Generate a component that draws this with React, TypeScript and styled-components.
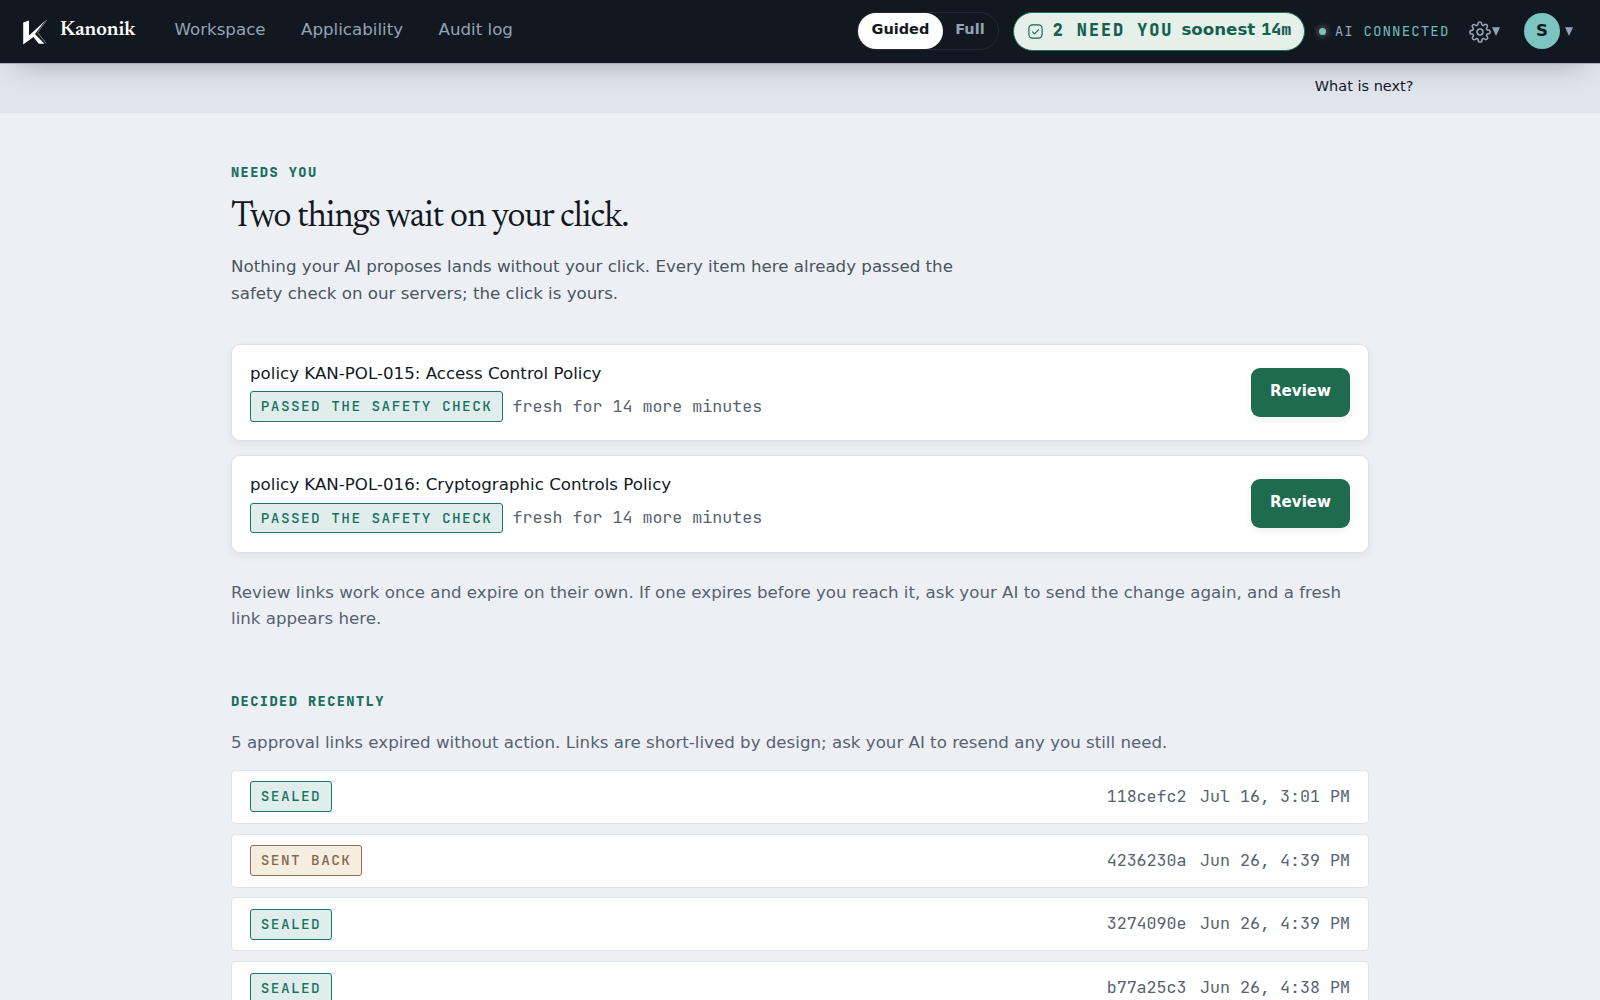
import React from "react";
import styled, { createGlobalStyle } from "styled-components";

const sans = '"DejaVu Sans", sans-serif';
const mono = '"JetBrains Mono", "DejaVu Sans Mono", monospace';
const serif = '"Newsreader Text", "Newsreader 16pt", Newsreader, "Liberation Serif", serif';

const Global = createGlobalStyle`
  *, *::before, *::after { box-sizing: border-box; }
  html, body { margin: 0; padding: 0; background: #ecf0f5; }
  body { font-family: ${sans}; font-size: 16.67px; line-height: 26.67px; color: #12181f; height: 1000px; overflow: hidden; }
  h1, h2, p { margin: 0; }
  button { font-family: inherit; border: 0; cursor: pointer; }
`;

const Header = styled.header`
  position: relative;
  z-index: 2;
  height: 63px;
  display: flex;
  align-items: center;
  padding: 0 27px 0 22px;
  background: #12181f;
  box-shadow: 0 1px 0 #a5adb7, 0 18px 30px -18px rgba(18, 24, 31, 0.33);
`;

const Brand = styled.a`
  display: flex;
  align-items: center;
  width: 152.5px;
  color: #fff;
`;

const BrandName = styled.span`
  margin: -4px 0 0 12px;
  font: 600 20.4px/26px ${serif};
`;

const Nav = styled.nav`
  display: flex;
  gap: 35.5px;
  margin-top: -2px;
  color: #94a3b5;
`;

const Tools = styled.div`
  display: flex;
  align-items: center;
  margin-left: auto;
`;

const Toggle = styled.div`
  display: flex;
  height: 38px;
  padding: 1px;
  margin: -1px 14px 0 0;
  border: 1px solid #252c35;
  border-radius: 19px;
`;

const ToggleOption = styled.button<{ $on?: boolean }>`
  padding: 0 ${(p) => (p.$on ? 13.3 : 12.6)}px 4px;
  border-radius: 18px;
  margin: ${(p) => (p.$on ? "-1px 0 -1px -1px" : "0")};
  background: ${(p) => (p.$on ? "#fff" : "transparent")};
  color: ${(p) => (p.$on ? "#12181f" : "#94a3b5")};
  font-size: 14.5px;
  font-weight: 700;
`;

const Pending = styled.a`
  display: flex;
  align-items: center;
  height: 39px;
  width: 292px;
  margin-top: -1px;
  padding: 0 0 2px 14px;
  border: 1px solid #1c6f5c;
  border-radius: 20px;
  background: #e6f0ea;
  color: #17604f;
  font-weight: 700;
  white-space: nowrap;

  svg { margin-top: 3px; }
`;

const PendingCount = styled.span`
  margin-left: 9.5px;
  font: 800 16.8px/26px ${mono};
  letter-spacing: 2px;
`;

const PendingTime = styled.span`
  margin-left: 8px;
  span { font-family: ${mono}; font-weight: 800; font-size: 16.67px; margin-left: 6px; }
`;

const Status = styled.span`
  display: flex;
  align-items: center;
  margin: -1px 0 0 14px;
  color: #6fbab6;
  font: 400 14.2px/22px ${mono};
  letter-spacing: 1.05px;
  white-space: nowrap;
  span { margin-right: 9.57px; color: #93a3b4; }
`;

const StatusDot = styled.i`
  width: 7px;
  height: 7px;
  margin-right: 8.5px;
  border-radius: 50%;
  background: #7cc4c0;
  box-shadow: 0 0 5px 3px rgba(255, 255, 255, 0.16);
`;

const MenuButton = styled.button<{ $gap: number; $left: number }>`
  display: flex;
  align-items: center;
  gap: ${(p) => p.$gap}px;
  margin-left: ${(p) => p.$left}px;
  padding: 0;
  background: none;
  color: #94a3b5;
`;

const Avatar = styled.span`
  display: grid;
  place-items: center;
  width: 36px;
  height: 36px;
  margin-top: -1px;
  padding-bottom: 2px;
  border-radius: 50%;
  background: #7cc4c0;
  color: #12181f;
  font-size: 16.67px;
  font-weight: 700;
`;

const Band = styled.div`
  display: flex;
  justify-content: flex-end;
  height: 50px;
  padding: 10px 186.5px 0 0;
  background: #e0e5ed;
  border-bottom: 1px solid #dce2ea;
  font-size: 14.5px;
`;

const Main = styled.main`
  width: 1138px;
  margin: 0 auto;
  padding-top: 46px;
`;

const Eyebrow = styled.h2<{ $top?: number }>`
  margin-top: ${(p) => p.$top ?? 0}px;
  font: 800 13.7px/26px ${mono};
  letter-spacing: 1.4px;
  color: #1c6f5c;
`;

const Title = styled.h1`
  margin-top: 11px;
  font: 400 35.4px/44px ${serif};
  letter-spacing: -0.94px;
  white-space: nowrap;
  color: #12181f;
`;

const Lead = styled.p`
  width: 740px;
  margin-top: 14px;
  color: #4a5560;
`;

const Note = styled.p<{ $top: number }>`
  margin-top: ${(p) => p.$top}px;
  color: #56626e;
`;

const Cards = styled.div`
  display: grid;
  gap: 13.8px;
  margin-top: 36.4px;
`;

const Card = styled.article`
  display: flex;
  align-items: center;
  justify-content: space-between;
  height: 97.5px;
  padding: 0 18px;
  background: #fff;
  border: 1px solid #dce2ea;
  border-radius: 9px;
  box-shadow: 0 3px 8px rgba(18, 24, 31, 0.06);
`;

const CardBody = styled.div`
  display: grid;
  gap: 4px;
  padding-bottom: 2px;
`;

const Line = styled.div`
  display: flex;
  align-items: center;
  gap: 9.4px;
`;

const Chip = styled.span<{ $warn?: boolean }>`
  height: 30.7px;
  padding: 0 9.8px;
  border: 1px solid ${(p) => (p.$warn ? "#92704f" : "#1c7568")};
  border-radius: 3px;
  background: ${(p) => (p.$warn ? "#f5eee0" : "#e0eeeb")};
  color: ${(p) => (p.$warn ? "#85684d" : "#1c7063")};
  font: 500 14.4px/28px ${mono};
  letter-spacing: 1.43px;
  white-space: nowrap;
`;

const Meta = styled.span`
  display: flex;
  gap: 13.5px;
  padding-bottom: 2px;
  font: 400 16.67px/26px ${mono};
  color: #56626e;
`;

const Review = styled.button`
  width: 99px;
  height: 49px;
  padding: 0 0 3px;
  border-radius: 9px;
  background: #1f6b4f;
  color: #fff;
  font-size: 15.1px;
  font-weight: 700;
  box-shadow: 0 3px 8px rgba(18, 24, 31, 0.07);
`;

const Rows = styled.div`
  display: grid;
  gap: 9.6px;
  margin-top: 13px;
`;

const Row = styled.div`
  display: flex;
  align-items: center;
  justify-content: space-between;
  height: 54.2px;
  padding: 0 18px;
  background: #fff;
  border: 1px solid #dce2ea;
  border-radius: 4px;
`;

const Logo = () => (
  <svg width="26" height="28" viewBox="0 0 26 28">
    <path d="M1.2 4.4 7 2.4v15L23.4 2.6 13 16l9.4 9.8h-5.6l-5.4-6.9L1.2 26.6z" fill="#fff" />
    <path d="M24.6 2.2 15.6 14.6l8.6 10.8" fill="none" stroke="#8d959f" strokeWidth="0.8" />
  </svg>
);

const CheckBox = () => (
  <svg width="15" height="15" viewBox="0 0 15 15" fill="none" stroke="currentColor" strokeWidth="1.1" strokeLinecap="round" strokeLinejoin="round">
    <rect x="0.9" y="0.9" width="13.2" height="13.2" rx="3.6" />
    <path d="m4.6 7.9 2 2 4-4.3" />
  </svg>
);

const Gear = () => (
  <svg width="22" height="22" viewBox="0 0 24 24" fill="none" stroke="currentColor" strokeWidth="1.7" strokeLinejoin="round">
    <circle cx="12" cy="12" r="3.2" />
    <path d="M19.4 15a1.65 1.65 0 0 0 .33 1.82l.06.06a2 2 0 1 1-2.83 2.83l-.06-.06a1.65 1.65 0 0 0-2.8 1.17V21a2 2 0 1 1-4 0v-.09a1.65 1.65 0 0 0-2.9-1.08l-.06.06a2 2 0 1 1-2.83-2.83l.06-.06a1.65 1.65 0 0 0-1.17-2.8H3a2 2 0 1 1 0-4h.09a1.65 1.65 0 0 0 1.08-2.9l-.06-.06a2 2 0 1 1 2.83-2.83l.06.06a1.65 1.65 0 0 0 2.8-1.17V3a2 2 0 1 1 4 0v.09a1.65 1.65 0 0 0 2.8 1.17l.06-.06a2 2 0 1 1 2.83 2.83l-.06.06a1.65 1.65 0 0 0 1.17 2.8H21a2 2 0 1 1 0 4h-.09a1.65 1.65 0 0 0-1.51 1z" />
  </svg>
);

const Caret = () => (
  <svg width="8" height="9" viewBox="0 0 8 9">
    <path d="M0 .2h8L4 8.9z" fill="currentColor" />
  </svg>
);

const policies = ["policy KAN-POL-015: Access Control Policy", "policy KAN-POL-016: Cryptographic Controls Policy"];

const decisions = [
  { sealed: true, id: "118cefc2", at: "Jul 16, 3:01 PM" },
  { sealed: false, id: "4236230a", at: "Jun 26, 4:39 PM" },
  { sealed: true, id: "3274090e", at: "Jun 26, 4:39 PM" },
  { sealed: true, id: "b77a25c3", at: "Jun 26, 4:38 PM" },
];

export default function App() {
  return (
    <>
      <Global />
      <Header>
        <Brand>
          <Logo />
          <BrandName>Kanonik</BrandName>
        </Brand>
        <Nav>
          <span>Workspace</span>
          <span>Applicability</span>
          <span>Audit log</span>
        </Nav>
        <Tools>
          <Toggle>
            <ToggleOption $on>Guided</ToggleOption>
            <ToggleOption>Full</ToggleOption>
          </Toggle>
          <Pending>
            <CheckBox />
            <PendingCount>2 NEED YOU</PendingCount>
            <PendingTime>soonest<span>14m</span></PendingTime>
          </Pending>
          <Status>
            <StatusDot />
            <span>AI</span>
            CONNECTED
          </Status>
          <MenuButton $gap={1.5} $left={19}>
            <Gear />
            <Caret />
          </MenuButton>
          <MenuButton $gap={5} $left={24}>
            <Avatar>S</Avatar>
            <Caret />
          </MenuButton>
        </Tools>
      </Header>
      <Band>What is next?</Band>
      <Main>
        <Eyebrow>NEEDS YOU</Eyebrow>
        <Title>Two things wait on your click.</Title>
        <Lead>
          Nothing your AI proposes lands without your click. Every item here already passed the safety check on our
          servers; the click is yours.
        </Lead>
        <Cards>
          {policies.map((name) => (
            <Card key={name}>
              <CardBody>
                <div>{name}</div>
                <Line>
                  <Chip>PASSED THE SAFETY CHECK</Chip>
                  <Meta>fresh for 14 more minutes</Meta>
                </Line>
              </CardBody>
              <Review>Review</Review>
            </Card>
          ))}
        </Cards>
        <Note $top={27.2}>
          Review links work once and expire on their own. If one expires before you reach it, ask your AI to send the
          change again, and a fresh link appears here.
        </Note>
        <Eyebrow $top={55}>DECIDED RECENTLY</Eyebrow>
        <Note $top={16}>
          5 approval links expired without action. Links are short-lived by design; ask your AI to resend any you still
          need.
        </Note>
        <Rows>
          {decisions.map((d) => (
            <Row key={d.id}>
              <Chip $warn={!d.sealed}>{d.sealed ? "SEALED" : "SENT BACK"}</Chip>
              <Meta>
                <span>{d.id}</span>
                <span>{d.at}</span>
              </Meta>
            </Row>
          ))}
        </Rows>
      </Main>
    </>
  );
}
